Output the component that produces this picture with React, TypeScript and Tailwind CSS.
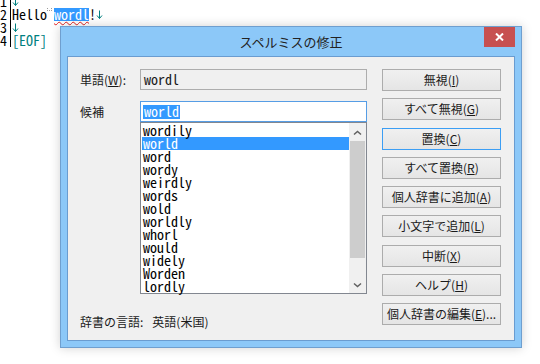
import type { ReactNode } from "react"

const candidates = [
  "wordily",
  "world",
  "word",
  "wordy",
  "weirdly",
  "words",
  "wold",
  "worldly",
  "whorl",
  "would",
  "widely",
  "Worden",
  "lordly",
]

function NewLine() {
  return (
    <svg width="7" height="11" viewBox="0 0 7 11" className="inline-block">
      <path d="M3.5 1.5v8M1 6.5l2.5 3 2.5-3" stroke="#008080" strokeWidth="1" fill="none" />
    </svg>
  )
}

function Btn({ children, focused }: { children: ReactNode; focused?: boolean }) {
  return (
    <div
      className={
        focused
          ? "h-[22px] flex items-center justify-center border border-[#3c9ef4] bg-gradient-to-b from-[#f0f0f0] to-[#e5e5e5] text-[12px] text-[#1a1a1a]"
          : "h-[22px] flex items-center justify-center border border-[#acacac] bg-gradient-to-b from-[#f0f0f0] to-[#e5e5e5] text-[12px] text-[#1a1a1a]"
      }
    >
      {children}
    </div>
  )
}

function Chevron({ down }: { down?: boolean }) {
  return (
    <svg width="9" height="6" viewBox="0 0 9 6">
      <path
        d={down ? "M1 1.5l3.5 3 3.5-3" : "M1 4.5l3.5-3 3.5 3"}
        stroke="#606060"
        strokeWidth="1.5"
        fill="none"
      />
    </svg>
  )
}

export default function App() {
  return (
    <div className="relative w-[540px] h-[364px] overflow-hidden bg-white">
      {/* editor */}
      <div className="flex -mt-[5px] text-[14px] leading-[13px] text-black font-['Noto_Sans_Mono_CJK_JP','DejaVu_Sans_Mono',monospace]">
        <div className="w-[11px] border-r border-black">
          <div className="h-[13px]">1</div>
          <div className="h-[13px]">2</div>
          <div className="h-[13px]">3</div>
          <div className="h-[13px]">4</div>
        </div>
        <div className="pl-[1px]">
          <div className="h-[13px] flex items-center">
            <NewLine />
          </div>
          <div className="h-[13px] flex items-center">
            <span>Hello</span>
            <span className="inline-block w-[7px] h-[13px] flex items-end justify-center pb-[2px]">
              <span className="block w-[5px] h-[3px] border border-t-0 border-dotted border-[#9a9a9a]" />
            </span>
            <span className="bg-[#3399ff] text-white underline decoration-wavy decoration-[#e02020] decoration-1 underline-offset-[1px]">
              wordl
            </span>
            <span>!</span>
            <NewLine />
          </div>
          <div className="h-[13px] flex items-center">
            <NewLine />
          </div>
          <div className="h-[13px] text-[#008080]">[EOF]</div>
        </div>
      </div>

      {/* dialog */}
      <div className="absolute left-[60px] top-[26px] w-[462px] h-[322px] flex flex-col px-[6px] pb-[6px] border border-[#6f9fcf] bg-[#8cc8f8] shadow-[0_0_10px_rgba(0,0,0,0.18)] font-['Noto_Sans_CJK_JP','Noto_Sans',sans-serif]">
        <div className="relative h-[29px] flex items-center justify-center">
          <span className="text-[13px] text-[#222] pt-[1px]">スペルミスの修正</span>
          <div className="absolute right-0 top-0 w-[31px] h-[20px] flex items-center justify-center bg-[#c75050]">
            <svg width="9" height="8" viewBox="0 0 9 8">
              <path d="M1 0.5l7 7M8 0.5l-7 7" stroke="white" strokeWidth="2" />
            </svg>
          </div>
        </div>

        <div className="flex-1 flex border border-[#6a9cd0] bg-[#f0f0f0] pt-[12px] pl-[12px] pr-[13px] text-[12px] text-[#1a1a1a]">
          <div className="w-[287px] flex flex-col">
            <div className="flex h-[21px]">
              <div className="w-[60px] flex items-center">
                単語(<u>W</u>):
              </div>
              <div className="w-[227px] h-[21px] flex items-center pl-[3px] border border-[#adadad] bg-[#f0f0f0] text-[14px] font-['Noto_Sans_Mono_CJK_JP','DejaVu_Sans_Mono',monospace]">
                wordl
              </div>
            </div>

            <div className="flex mt-[11px]">
              <div className="w-[60px] pt-[2px]">候補</div>
              <div className="w-[227px] flex flex-col font-['Noto_Sans_Mono_CJK_JP','DejaVu_Sans_Mono',monospace] text-[14px] leading-[13px]">
                <div className="h-[21px] flex items-center pl-[2px] border border-[#569de5] bg-white">
                  <span className="bg-[#3399ff] text-white h-[14px] flex items-center px-[1px]">world</span>
                </div>
                <div className="h-[172px] flex border border-[#828790] bg-white">
                  <div className="flex-1 pl-[1px] pt-[1px]">
                    {candidates.map((w) => (
                      <div
                        key={w}
                        className={
                          w === "world"
                            ? "h-[13px] pl-[1px] bg-[#3399ff] text-white"
                            : "h-[13px] pl-[1px] text-black"
                        }
                      >
                        {w}
                      </div>
                    ))}
                  </div>
                  <div className="w-[17px] flex flex-col bg-[#f0f0f0] pt-[1px]">
                    <div className="h-[17px] flex items-center justify-center">
                      <Chevron />
                    </div>
                    <div className="h-[117px] mx-[1px] bg-[#cdcdcd]" />
                    <div className="flex-1" />
                    <div className="h-[17px] flex items-center justify-center">
                      <Chevron down />
                    </div>
                  </div>
                </div>
              </div>
            </div>

            <div className="mt-[20px] h-[16px] flex items-center">
              <span>辞書の言語:</span>
              <span className="ml-[9px]">英語(米国)</span>
            </div>
          </div>

          <div className="ml-[15px] w-[119px] flex flex-col gap-[7.25px]">
            <Btn>
              無視(<u>I</u>)
            </Btn>
            <Btn>
              すべて無視(<u>G</u>)
            </Btn>
            <Btn focused>
              置換(<u>C</u>)
            </Btn>
            <Btn>
              すべて置換(<u>R</u>)
            </Btn>
            <Btn>
              個人辞書に追加(<u>A</u>)
            </Btn>
            <Btn>
              小文字で追加(<u>L</u>)
            </Btn>
            <Btn>
              中断(<u>X</u>)
            </Btn>
            <Btn>
              ヘルプ(<u>H</u>)
            </Btn>
            <Btn>
              個人辞書の編集(<u>E</u>)...
            </Btn>
          </div>
        </div>
      </div>
    </div>
  )
}
